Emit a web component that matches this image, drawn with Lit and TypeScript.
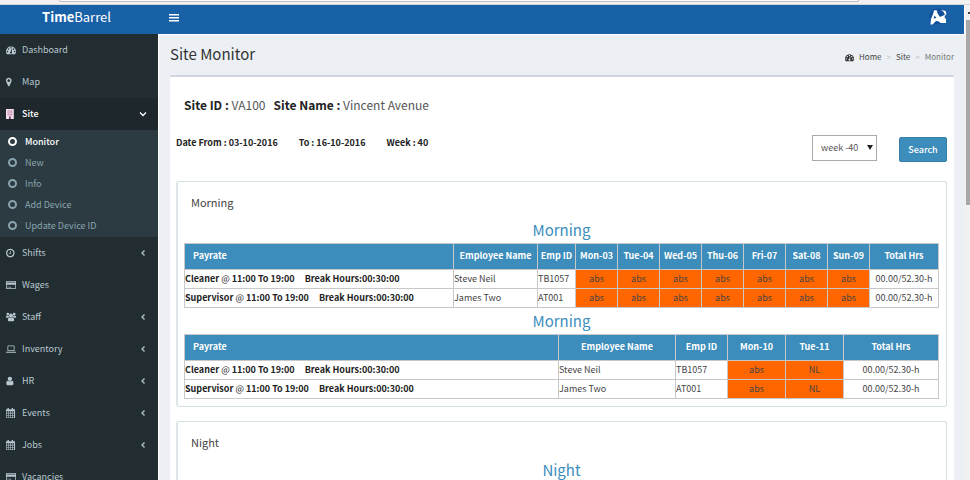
import { LitElement, html, css, svg, nothing } from "lit";
import { customElement, state } from "lit/decorators.js";
import { classMap } from "lit/directives/class-map.js";

const ICONS: Record<string, unknown> = {
  dashboard: svg`<path d="M384 1152q0-53-37.5-90.5t-90.5-37.5-90.5 37.5-37.5 90.5 37.5 90.5 90.5 37.5 90.5-37.5 37.5-90.5zm192-448q0-53-37.5-90.5t-90.5-37.5-90.5 37.5-37.5 90.5 37.5 90.5 90.5 37.5 90.5-37.5 37.5-90.5zm428 481l101-382q6-26-7.5-48.5t-38.5-29.5-48 6.5-30 39.5l-101 382q-60 5-107 43.5t-63 98.5q-20 77 20 146t117 89 146-20 89-117q16-60-6-117t-72-91zm660-33q0-53-37.5-90.5t-90.5-37.5-90.5 37.5-37.5 90.5 37.5 90.5 90.5 37.5 90.5-37.5 37.5-90.5zm-640-640q0-53-37.5-90.5t-90.5-37.5-90.5 37.5-37.5 90.5 37.5 90.5 90.5 37.5 90.5-37.5 37.5-90.5zm448 192q0-53-37.5-90.5t-90.5-37.5-90.5 37.5-37.5 90.5 37.5 90.5 90.5 37.5 90.5-37.5 37.5-90.5zm320 448q0 261-141 483-19 29-54 29h-1402q-35 0-54-29-141-221-141-483 0-182 71-348t191-286 286-191 348-71 348 71 286 191 191 286 71 348z"/>`,
  map: svg`<path transform="translate(-400 0)" d="M1152 640q0-106-75-181t-181-75-181 75-75 181 75 181 181 75 181-75 75-181zm256 0q0 109-33 179l-364 774q-16 33-47.5 52t-67.5 19-67.5-19-46.5-52l-365-774q-33-70-33-179 0-212 150-362t362-150 362 150 150 362z"/>`,
  building: svg`<path fill="#f6dfe9" d="M0 0h1400v1792H0z"/><path fill="#c08ab4" d="M280 240h840v900H280z"/><path fill="#f6dfe9" d="M500 240h80v900h-80zM820 240h80v900h-80zM280 480h840v80H280zM280 800h840v80H280z"/><path fill="#70406a" d="M540 1340h320v452H540z"/>`,
  clock: svg`<path transform="translate(-128 0)" d="M1024 544v448q0 14-9 23t-23 9h-320q-14 0-23-9t-9-23v-64q0-14 9-23t23-9h224v-352q0-14 9-23t23-9h64q14 0 23 9t9 23zm416 352q0-148-73-273t-198-198-273-73-273 73-198 198-73 273 73 273 198 198 273 73 273-73 198-198 73-273zm224 0q0 209-103 385.500t-279.500 279.500-385.500 103-385.500-103-279.500-279.500-103-385.500 103-385.500 279.500-279.500 385.500-103 385.500 103 279.500 279.500 103 385.500z"/>`,
  card: svg`<path fill-rule="evenodd" d="M60 192h1672l60 60v1288l-60 60H60l-60-60V252zM130 320v150h1532V320zM130 830v640h1532V830zM240 1220h220v120H240zM560 1220h380v120H560z"/>`,
  users: svg`<circle cx="896" cy="620" r="350"/><circle cx="330" cy="380" r="240"/><circle cx="1462" cy="380" r="240"/><path d="M620 930q276 180 552 0 270 20 300 500 0 230-190 234H510q-190-4-190-234 30-480 300-500zM150 620q160 90 330 20 0 200 120 240-180 20-280 170H130Q0 1040 0 890q10-220 150-270zM1642 620q-160 90-330 20 0 200-120 240 180 20 280 170h190q130-10 130-160-10-220-150-270z"/>`,
  laptop: svg`<path fill-rule="evenodd" d="M400 256h992q140 0 140 140v760q0 120-140 120H400q-140 0-140-120V396q0-140 140-140zM400 396v740h992V396zM0 1380h1792v90q0 90-160 90H160Q0 1560 0 1470z"/>`,
  user: svg`<path transform="translate(-200 0)" d="M1536 1399q0 109-62.5 187t-150.5 78h-854q-88 0-150.5-78t-62.5-187q0-85 8.5-160.5t31.5-152 58.5-131 94-89 134.5-34.5q131 128 313 128t313-128q76 0 134.5 34.5t94 89 58.5 131 31.5 152 8.5 160.5zm-256-887q0 159-112.5 271.5t-271.500 112.500-271.500-112.500-112.500-271.500 112.500-271.500 271.500-112.500 271.500 112.500 112.500 271.500z"/>`,
  calendar: svg`<path fill-rule="evenodd" d="M0 220h250V80q0-80 80-80h120q80 0 80 80v140h480V80q0-80 80-80h120q80 0 80 80v140h250q80 0 80 100v1372q0 100-100 100H100Q0 1792 0 1692zM100 600v270h270V600zM470 600v270h270V600zM840 600v270h270V600zM1210 600v270h230V600zM100 970v270h270V970zM470 970v270h270V970zM840 970v270h270V970zM1210 970v270h230V970zM100 1340v340h270v-340zM470 1340v340h270v-340zM840 1340v340h270v-340zM1210 1340v340h230v-340z"/>`,
};

const icon = (name: string) =>
  html`<svg class="icon" viewBox="0 0 1792 1792" aria-hidden="true">${ICONS[name]}</svg>`;

const chevron = (open: boolean) =>
  html`<svg class="chevron" viewBox="0 0 8 8" aria-hidden="true">
    <path d=${open ? "M1 2.5L4 5.5L7 2.5" : "M5.5 1.5L3 4L5.5 6.5"} />
  </svg>`;

interface NavItem { label: string; icon: string; more?: boolean; children?: string[]; }

const NAV: NavItem[] = [
  { label: "Dashboard", icon: "dashboard" },
  { label: "Map", icon: "map" },
  { label: "Site", icon: "building", more: true, children: ["Monitor", "New", "Info", "Add Device", "Update Device ID"] },
  { label: "Shifts", icon: "clock", more: true },
  { label: "Wages", icon: "card" },
  { label: "Staff", icon: "users", more: true },
  { label: "Inventory", icon: "laptop", more: true },
  { label: "HR", icon: "user", more: true },
  { label: "Events", icon: "calendar", more: true },
  { label: "Jobs", icon: "calendar", more: true },
  { label: "Vacancies", icon: "card" },
];

interface Row { role: string; name: string; id: string; marks: string[]; }
interface Roster { cls: string; days: string[]; rows: Row[]; }

const roster = (cls: string, days: string[], marks: string[]): Roster => ({
  cls,
  days,
  rows: [
    { role: "Cleaner", name: "Steve Neil", id: "TB1057", marks },
    { role: "Supervisor", name: "James Two", id: "AT001", marks },
  ],
});

const MORNING: Roster[] = [
  roster("full", ["Mon-03", "Tue-04", "Wed-05", "Thu-06", "Fri-07", "Sat-08", "Sun-09"], Array(7).fill("abs")),
  roster("part", ["Mon-10", "Tue-11"], ["abs", "NL"]),
];

@customElement("app-nav")
class AppNav extends LitElement {
  @state() private openItem = "Site";

  static styles = css`
    :host { display: block; background: #222d32; font-size: 9px; line-height: 16px; }
    ul { list-style: none; margin: 0; padding: 0; }
    a { display: flex; align-items: center; color: #b8c7ce; text-decoration: none; }
    .link { height: 32px; padding: 0 11px 0 6px; }
    .link.open { background: #1e282c; color: #fff; font-weight: 500; }
    .label { flex: 1; margin-left: 6px; }
    .icon { width: 10px; height: 10px; fill: currentColor; flex: none; }
    .chevron { width: 8px; height: 8px; fill: none; stroke: currentColor; stroke-width: 1.3; }
    .sub { background: #2c3b41; padding: 1px 0; }
    .sub a { height: 21px; padding-left: 8px; gap: 8px; color: #8aa4af; }
    .sub a.current { color: #fff; font-weight: 500; }
    .ring { box-sizing: border-box; width: 9px; height: 9px; border: 2px solid currentColor; border-radius: 50%; }
  `;

  render() {
    return html`<nav aria-label="Main"><ul>
      ${NAV.map((n) => {
        const open = !!n.children && this.openItem === n.label;
        return html`<li>
          <a class=${classMap({ link: true, open })} href="#${n.label.toLowerCase()}"
            @click=${() => { if (n.children) this.openItem = open ? "" : n.label; }}>
            ${icon(n.icon)}<span class="label">${n.label}</span>${n.more ? chevron(open) : nothing}
          </a>
          ${open
            ? html`<ul class="sub">${n.children!.map((c, i) => html`<li>
                <a class=${classMap({ current: i === 0 })} href="#site"><span class="ring"></span>${c}</a>
              </li>`)}</ul>`
            : nothing}
        </li>`;
      })}
    </ul></nav>`;
  }
}

@customElement("shift-table")
class ShiftTable extends LitElement {
  static properties = { data: { attribute: false } };
  declare data: Roster;

  static styles = css`
    :host { display: block; }
    table { width: 100%; border-collapse: collapse; table-layout: fixed; font-size: 9px; line-height: 16px; color: #444; }
    th, td { box-sizing: border-box; border: 1px solid #c8c8c8; padding: 1px 0; white-space: nowrap; font-weight: 400; text-align: left; }
    thead th { background: #3c8dbc; color: #fff; font-weight: 700; text-align: center; padding: 4px 0 5px; }
    thead .rate { text-align: left; padding-left: 8px; }
    tbody th { color: #222; font-weight: 700; }
    .at { font-weight: 400; }
    .break { margin-left: 10px; }
    .mark { background: #f60; text-align: center; }
    .total { text-align: center; }
    .full .name { width: 84px; }
    .full .id { width: 38px; }
    .full .day { width: 42px; }
    .full .total { width: 69px; }
    .part .name { width: 117px; }
    .part .id { width: 52px; }
    .part .day { width: 58px; }
    .part .total { width: 95px; }
  `;

  render() {
    const { cls, days, rows } = this.data;
    return html`<table class=${cls}>
      <thead><tr>
        <th class="rate" scope="col">Payrate</th>
        <th class="name" scope="col">Employee Name</th>
        <th class="id" scope="col">Emp ID</th>
        ${days.map((d) => html`<th class="day" scope="col">${d}</th>`)}
        <th class="total" scope="col">Total Hrs</th>
      </tr></thead>
      <tbody>
        ${rows.map((r) => html`<tr>
          <th scope="row">${r.role} <span class="at">@</span> 11:00 To 19:00<span class="break">Break Hours:00:30:00</span></th>
          <td>${r.name}</td><td>${r.id}</td>
          ${r.marks.map((m) => html`<td class="mark">${m}</td>`)}
          <td class="total">00.00/52.30-h</td>
        </tr>`)}
      </tbody>
    </table>`;
  }
}

@customElement("app-root")
class AppRoot extends LitElement {
  static styles = css`
    :host {
      display: flex; flex-direction: column; height: 100vh; overflow: hidden;
      font-family: "Noto Sans CJK SC", "Source Sans Pro", sans-serif;
      font-size: 9px; line-height: 16px; color: #333; background: #f1f1f1;
    }
    .chrome { flex: none; height: 5px; box-sizing: border-box; border-bottom: 1px solid #d5d5d5; padding: 0 111px 0 59px; }
    .omnibox { height: 2px; box-sizing: border-box; background: #fff; border: 1px solid #bbb; border-top: 0; border-radius: 0 0 2px 2px; }
    .window { flex: 1; min-height: 0; display: flex; }
    .page { flex: 1; min-width: 0; display: flex; flex-direction: column; }
    header { flex: none; height: 29px; display: flex; align-items: center; background: #1961a7; color: #fff; border-right: 1px solid #fff; }
    .brand { width: 153px; text-align: center; font-size: 13px; line-height: 20px; color: #fff; text-decoration: none; margin-bottom: 6px; }
    .toggle { border: 0; background: none; padding: 0; margin: 0 auto 5px 16px; display: flex; }
    .burger { width: 10px; height: 9px; fill: #fff; }
    .logo { width: 20px; height: 18px; margin: 0 16px 5px 0; display: flex; }
    .columns { flex: 1; min-height: 0; display: flex; }
    app-nav { flex: none; width: 158px; }
    main { flex: 1; min-width: 0; background: #ecf0f5; border-left: 1px solid #fff; border-top: 1px solid #fff; padding: 0 11px; }
    .top { height: 40px; display: flex; align-items: center; justify-content: space-between; }
    h1 { margin: 0; font-size: 15px; line-height: 24px; font-weight: 400; padding-bottom: 2px; }
    .crumbs { display: flex; align-items: center; list-style: none; margin: 0; padding: 4px 0 0; font-size: 8px; }
    .crumbs li { display: flex; align-items: center; color: #777; }
    .crumbs li + li::before { content: ">"; color: #bbb; padding: 0 5px; }
    .crumbs a { display: flex; align-items: center; gap: 5px; color: #444; text-decoration: none; }
    .crumbs .icon { width: 9px; height: 9px; fill: #333; }
    .box { background: #fff; border-top: 2px solid #d2d6de; border-radius: 2px 2px 0 0; padding: 18px 7px 0 6px; height: 100%; }
    .site { display: flex; gap: 8px; margin: 0 0 0 8px; font-size: 12px; line-height: 20px; color: #555; }
    b { color: #222; }
    .filter { display: flex; align-items: flex-start; height: 46px; margin-top: 20px; }
    .range { display: flex; flex: 1; gap: 21px; font-weight: 700; color: #222; }
    select {
      appearance: none; box-sizing: border-box; width: 65px; height: 26px; padding: 0 8px; margin-right: 22px;
      border: 1px solid #aaa; border-radius: 0; background: #fff; color: #555; font: inherit;
    }
    .pick { display: flex; position: relative; }
    .pick::after { content: ""; position: absolute; right: 26px; top: 10px; border: 3px solid transparent; border-top: 5px solid #222; border-bottom: 0; }
    .search { margin-top: 2px; width: 48px; height: 25px; padding: 0; border: 1px solid #367fa9; border-radius: 2px; background: #3c8dbc; color: #fff; font: inherit; font-weight: 500; }
    .panel { border: 1px solid #d3dfe3; border-left: 2px solid #dfe6ea; border-radius: 3px; padding: 11px 7px 7px 6px; margin-bottom: 14px; }
    h2 { margin: 0 0 6px 7px; font-size: 11px; line-height: 18px; font-weight: 400; color: #444; }
    h3 { margin: 0; font-size: 15px; line-height: 26px; font-weight: 400; color: #3c8dbc; text-align: center; }
    .scroll { flex: none; width: 5px; background: #f1f1f1; display: flex; flex-direction: column; align-items: flex-end; }
    .up { margin: 7px 0 0; width: 2px; height: 2px; background: #444; }
    .thumb { width: 4px; height: 185px; margin-top: 6px; background: #a8a8a8; }
  `;

  private crumb(label: string, first = false) {
    return html`<li><a href="#home">${first ? icon("dashboard") : nothing}${label}</a></li>`;
  }

  render() {
    return html`
      <div class="chrome"><div class="omnibox"></div></div>
      <div class="window">
        <div class="page">
          <header>
            <a class="brand" href="#home"><strong>Time</strong>Barrel</a>
            <button class="toggle" aria-label="Toggle navigation">
              <svg class="burger" viewBox="0 0 10 9"><path d="M0 1h10v1.400H0zM0 4h10v1.400H0zM0 7h10v1.400H0z" /></svg>
            </button>
            <a class="logo" href="#account" aria-label="Account">
              <svg viewBox="0 0 20 18">
                <circle cx="9.500" cy="8.500" r="8" fill="#0f4f9c" />
                <path fill="#fff" d="M2.500 16.500L3 11Q5.500 6 6 2.500L8.500 2Q9.500 6.500 12 9L17.500 6.500Q15.500 9.500 18 11V15H12.500Q10.500 12.500 8 13L4.500 16.500zM6.500 7.500L5.500 10.500L8.500 10zM13 2L17.500 3Q19 5 18 7.500L16.500 6Q16.500 4 13 2z" />
              </svg>
            </a>
          </header>
          <div class="columns">
            <app-nav></app-nav>
            <main>
              <div class="top">
                <h1>Site Monitor</h1>
                <ol class="crumbs">${this.crumb("Home", true)}${this.crumb("Site")}<li>Monitor</li></ol>
              </div>
              <div class="box">
                <div class="site"><span><b>Site ID :</b> VA100</span><span><b>Site Name :</b> Vincent Avenue</span></div>
                <form class="filter" @submit=${(e: Event) => e.preventDefault()}>
                  <div class="range"><span>Date From : 03-10-2016</span><span>To : 16-10-2016</span><span>Week : 40</span></div>
                  <div class="pick"><select aria-label="Week"><option>week -40</option></select></div>
                  <button class="search">Search</button>
                </form>
                <section class="panel">
                  <h2>Morning</h2>
                  ${MORNING.map((r) => html`<h3>Morning</h3><shift-table .data=${r}></shift-table>`)}
                </section>
                <section class="panel">
                  <h2>Night</h2>
                  <h3>Night</h3>
                </section>
              </div>
            </main>
          </div>
        </div>
        <div class="scroll" aria-hidden="true"><span class="up"></span><span class="thumb"></span></div>
      </div>
    `;
  }
}
